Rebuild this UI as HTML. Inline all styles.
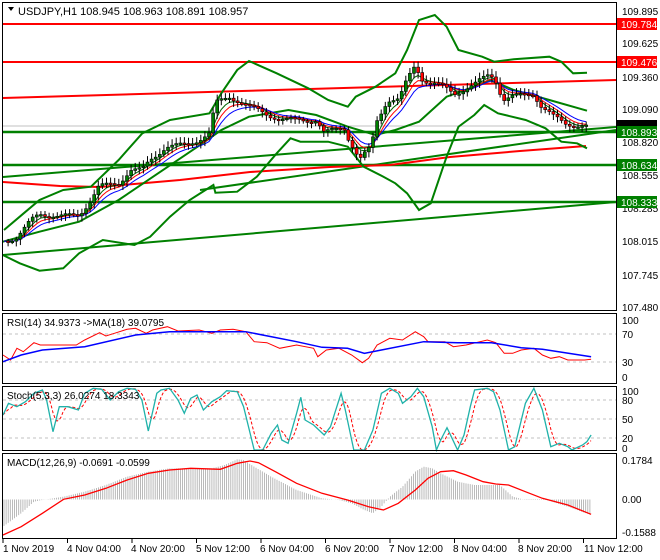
<!DOCTYPE html>
<html><head><meta charset="utf-8"><style>
html,body{margin:0;padding:0;background:#fff;}
svg{display:block;font-family:"Liberation Sans",sans-serif;font-size:11px;}
</style></head><body>
<svg id="s" width="660" height="560" viewBox="0 0 660 560" xmlns="http://www.w3.org/2000/svg">
<rect width="660" height="560" fill="#fff"/>
<g id="g"></g>
<g fill="none" stroke="#000" stroke-width="1">
<rect x="2.5" y="2.5" width="614" height="308"/>
<rect x="2.5" y="313.5" width="614" height="70"/>
<rect x="2.5" y="386.5" width="614" height="64"/>
<rect x="2.5" y="453.5" width="614" height="85"/>
</g>
<path d="M8 7 L14 7 L11 11 Z" fill="#000"/>
<text x="18" y="15">USDJPY,H1  108.945 108.963 108.891 108.957</text>
<text x="7" y="326" font-size="10">RSI(14) 34.9373  -&gt;MA(18) 39.0795</text>
<text x="7" y="399" font-size="10">Stoch(5,3,3) 26.0274 18.3343</text>
<text x="7" y="466" font-size="10">MACD(12,26,9) -0.0691 -0.0599</text>
<g font-size="10" fill="#000">
<text x="622" y="15">109.895</text>
<text x="622" y="47">109.625</text>
<text x="622" y="81">109.360</text>
<text x="622" y="113">109.090</text>
<text x="622" y="146">108.820</text>
<text x="622" y="179">108.555</text>
<text x="622" y="212">108.285</text>
<text x="622" y="245">108.015</text>
<text x="622" y="279">107.745</text>
<text x="622" y="311">107.480</text>
<text x="622" y="324">100</text>
<text x="622" y="338">70</text>
<text x="622" y="366">30</text>
<text x="622" y="381">0</text>
<text x="622" y="395">100</text>
<text x="622" y="404">80</text>
<text x="622" y="423">50</text>
<text x="622" y="442">20</text>
<text x="622" y="452">0</text>
<text x="622" y="464">0.1784</text>
<text x="622" y="503">0.00</text>
<text x="622" y="536">-0.1588</text>
</g>
<rect x="617" y="18" width="40" height="12" fill="#ff0000"/><text x="621" y="28" fill="#fff" font-size="10">109.784</text>
<rect x="617" y="56" width="40" height="12" fill="#ff0000"/><text x="621" y="66" fill="#fff" font-size="10">109.476</text>
<rect x="617" y="120" width="40" height="7" fill="#000"/>
<rect x="617" y="126" width="40" height="12" fill="#008000"/><text x="621" y="136" fill="#fff" font-size="10">108.893</text>
<rect x="617" y="159" width="40" height="12" fill="#008000"/><text x="621" y="169" fill="#fff" font-size="10">108.634</text>
<rect x="617" y="196" width="40" height="12" fill="#008000"/><text x="621" y="206" fill="#fff" font-size="10">108.333</text>
<g font-size="10" fill="#000">
<text x="3" y="552">1 Nov 2019</text>
<text x="67" y="552">4 Nov 04:00</text>
<text x="131" y="552">4 Nov 20:00</text>
<text x="196" y="552">5 Nov 12:00</text>
<text x="260" y="552">6 Nov 04:00</text>
<text x="325" y="552">6 Nov 20:00</text>
<text x="389" y="552">7 Nov 12:00</text>
<text x="453" y="552">8 Nov 04:00</text>
<text x="518" y="552">8 Nov 20:00</text>
<text x="584" y="552">11 Nov 12:00</text>
</g>
</svg>
<script>
var g=document.getElementById('g');var NS='http://www.w3.org/2000/svg';
function el(t,a){var e=document.createElementNS(NS,t);for(var k in a)e.setAttribute(k,a[k]);g.appendChild(e);return e;}
function M(p){return p.map(function(q){return [q[0]/2.53,q[1]/3];});}
function I(p){return p.map(function(q){return [q[0]/2.36,q[1]/3+300];});}
function pl(p,c,w,d){var a={points:p.map(function(q){return q[0].toFixed(1)+','+q[1].toFixed(1)}).join(' '),fill:'none',stroke:c,'stroke-width':w};if(d)a['stroke-dasharray']=d;el('polyline',a);}
function interp(p,x){for(var i=0;i<p.length-1;i++){if(x>=p[i][0]&&x<=p[i+1][0]){var t=(x-p[i][0])/(p[i+1][0]-p[i][0]||1);return p[i][1]+t*(p[i+1][1]-p[i][1]);}}return x<p[0][0]?p[0][1]:p[p.length-1][1];}
// grid dashed lines in indicators
[334,362].forEach(function(y){el('line',{x1:3,x2:616,y1:y,y2:y,stroke:'#c0c0c0','stroke-dasharray':'3,3'});});
[400,419,438].forEach(function(y){el('line',{x1:3,x2:616,y1:y,y2:y,stroke:'#c0c0c0','stroke-dasharray':'3,3'});});
el('line',{x1:3,x2:616,y1:126,y2:126,stroke:'#c0c0c0'});
// ticks
[[3,316],[67,311]].forEach(function(){});
for(var tx=3;tx<616;tx+=64.5){el('line',{x1:tx,x2:tx,y1:539,y2:543,stroke:'#000'});}
// horizontal lines
el('line',{x1:3,x2:616,y1:24,y2:24,stroke:'#f00','stroke-width':2});
el('line',{x1:3,x2:616,y1:62,y2:62,stroke:'#f00','stroke-width':2});
el('line',{x1:3,x2:616,y1:98,y2:80,stroke:'#f00','stroke-width':2});
el('line',{x1:3,x2:616,y1:132,y2:132,stroke:'#008000','stroke-width':2.5});
el('line',{x1:3,x2:616,y1:165,y2:165,stroke:'#008000','stroke-width':2.5});
el('line',{x1:3,x2:616,y1:202,y2:202,stroke:'#008000','stroke-width':2.5});
el('line',{x1:3,x2:616,y1:255,y2:202,stroke:'#008000','stroke-width':2});
el('line',{x1:3,x2:616,y1:177,y2:127,stroke:'#008000','stroke-width':2});
el('line',{x1:200,x2:616,y1:190,y2:130,stroke:'#008000','stroke-width':2});
pl([[3,182],[60,186],[100,187],[180,180],[250,172],[330,167],[390,165],[450,157],[520,151],[586,146]],'#f00',2);
// Bollinger
var up=M([[10,690],[60,640],[100,600],[160,570],[230,560],[300,480],[360,400],[430,360],[530,340],[560,280],[600,210],[630,183],[700,220],[780,265],[830,300],[880,320],[900,290],[950,260],[1000,220],[1030,150],[1060,60],[1100,45],[1130,80],[1160,150],[1220,170],[1250,185],[1300,178],[1390,170],[1420,185],[1450,220],[1485,218]]);
var lo=M([[7,765],[50,790],[100,812],[160,805],[200,760],[260,720],[340,735],[380,710],[430,650],[480,600],[520,570],[540,555],[545,578],[600,575],[650,530],[700,460],[735,415],[760,425],[830,425],[880,440],[920,500],[970,530],[1000,550],[1030,580],[1060,630],[1090,610],[1130,470],[1160,380],[1200,345],[1225,315],[1260,340],[1330,360],[1380,385],[1420,425],[1460,430],[1485,445]]);
var mid=M([[7,725],[100,695],[200,665],[300,600],[400,520],[500,440],[560,390],[630,350],[730,330],[800,345],[880,380],[950,405],[1000,390],[1060,365],[1130,290],[1200,260],[1240,240],[1300,270],[1390,300],[1485,332]]);
pl(up,'#008000',2);pl(lo,'#008000',2);pl(mid,'#008000',2);
// price path
var cp=M([[7,720],[40,715],[60,690],[80,660],[100,640],[150,650],[200,645],[230,600],[250,560],[300,550],[330,510],[360,510],[380,480],[420,440],[470,435],[500,420],[530,400],[545,310],[580,290],[600,300],[630,320],[680,345],[720,360],[800,360],[820,400],[870,380],[880,410],[910,480],[940,440],[950,370],[980,300],[1010,300],[1030,240],[1050,195],[1070,240],[1120,260],[1150,280],[1200,255],[1240,220],[1260,250],[1270,300],[1300,290],[1350,280],[1370,320],[1400,350],[1430,370],[1485,380]]);
var xs=[],cl=[];for(var x=4;x<=588;x+=4.1){xs.push(x);cl.push(interp(cp,x)+Math.sin(x*1.7)*2.5);}
// MAs
function ema(a,n){var k=2/(n+1),o=[],v=a[0];a.forEach(function(y){v=v+k*(y-v);o.push(v);});return o;}
[[ema(cl,4),'#006400'],[ema(cl,6),'#f00'],[ema(cl,9),'#00f']].forEach(function(m){pl(xs.map(function(x,i){return [x,m[0][i]];}),m[1],1);});
for(var i=1;i<xs.length;i++){var o=cl[i-1],c=cl[i],x=xs[i];var hi=Math.min(o,c)-2-Math.abs(Math.sin(i*3.1))*4,lw=Math.max(o,c)+2+Math.abs(Math.cos(i*2.3))*4;
el('line',{x1:x,x2:x,y1:hi,y2:lw,stroke:'#000'});
var t=Math.min(o,c),h=Math.max(Math.abs(o-c),1.5);el('rect',{x:x-1.5,y:t,width:3,height:h,fill:c<o?'#008000':'#f00',stroke:'#000','stroke-width':0.6});}
// RSI
pl(I([[7,165],[25,180],[40,145],[55,155],[80,128],[95,135],[130,135],[180,135],[200,120],[235,98],[250,108],[270,100],[300,88],[320,85],[345,100],[360,90],[395,80],[420,93],[470,90],[500,100],[520,90],[550,88],[580,95],[600,125],[630,128],[660,145],[700,135],[740,145],[750,170],[770,150],[800,145],[830,165],[855,188],[870,175],[890,135],[920,115],[950,120],[980,95],[1000,110],[1010,125],[1050,125],[1070,140],[1100,135],[1150,120],[1170,128],[1190,160],[1210,160],[1230,150],[1260,145],[1280,165],[1300,175],[1320,170],[1340,180],[1380,180],[1395,178]]),'#f00',1);
pl(I([[7,185],[50,165],[100,150],[200,140],[320,105],[400,95],[500,95],[580,95],[700,125],[760,142],[820,145],[860,160],[900,150],[1000,125],[1080,128],[1160,128],[1230,143],[1280,148],[1395,170]]),'#00f',1.5);
// Stoch
var st=I([[7,345],[20,310],[40,320],[60,305],[80,280],[100,270],[110,300],[125,395],[140,320],[160,320],[185,330],[200,280],[220,265],[240,268],[260,300],[280,275],[300,265],[320,268],[335,300],[350,393],[370,280],[380,270],[400,265],[420,300],[435,340],[450,295],[465,285],[480,330],[500,305],[520,290],[535,272],[560,275],[575,320],[600,450],[620,450],[640,400],[655,375],[665,420],[680,430],[700,340],[710,292],[720,360],[740,375],[765,405],[780,380],[790,340],[805,280],[815,330],[835,450],[860,450],[880,390],[900,280],[920,265],[940,280],[950,310],[970,290],[985,265],[1000,290],[1020,380],[1030,450],[1040,420],[1055,383],[1065,410],[1080,450],[1095,405],[1110,320],[1120,270],[1150,265],[1165,275],[1180,330],[1200,450],[1215,440],[1240,310],[1260,265],[1280,330],[1300,440],[1320,430],[1340,440],[1350,450],[1375,435],[1385,425],[1395,405]]);
var sx=[],sv=[];for(var x=3;x<=591;x+=2){sx.push(x);sv.push(interp(st,x));}
var sg=[];for(var i=0;i<sv.length;i++){var s=0,n=0;for(var j=i-4;j<=i;j++){if(j>=0){s+=sv[j];n++;}}sg.push(s/n);}
pl(sx.map(function(x,i){return [x,sg[i]];}),'#f00',1,'3,2');
pl(st,'#20b2aa',1.3);
// MACD
var ht=I([[7,680],[50,640],[80,605],[100,600],[150,590],[200,575],[250,555],[300,530],[350,515],[400,505],[450,505],[500,505],[530,495],[560,478],[575,480],[600,500],[640,530],[700,570],[760,595],[800,600],[830,610],[860,630],[880,640],[900,620],[920,590],[950,560],[980,515],[1000,500],[1020,505],[1040,520],[1080,545],[1120,555],[1180,555],[1210,590],[1240,600],[1290,600],[1340,620],[1395,645]]);
for(var x=4;x<=591;x+=2.1){var y=interp(ht,x);el('line',{x1:x,x2:x,y1:499.5,y2:y,stroke:'#a8a8a8','stroke-width':0.8});}
pl(I([[7,705],[50,680],[100,640],[150,598],[200,585],[250,565],[300,540],[350,520],[400,510],[450,505],[520,508],[560,490],[590,483],[610,488],[650,515],[700,550],[760,580],[820,600],[870,620],[905,630],[940,610],[980,570],[1010,535],[1040,515],[1070,512],[1100,525],[1140,545],[1170,552],[1200,555],[1240,575],[1280,595],[1340,615],[1395,643]]),'#f00',1.3);
</script>
</body></html>
